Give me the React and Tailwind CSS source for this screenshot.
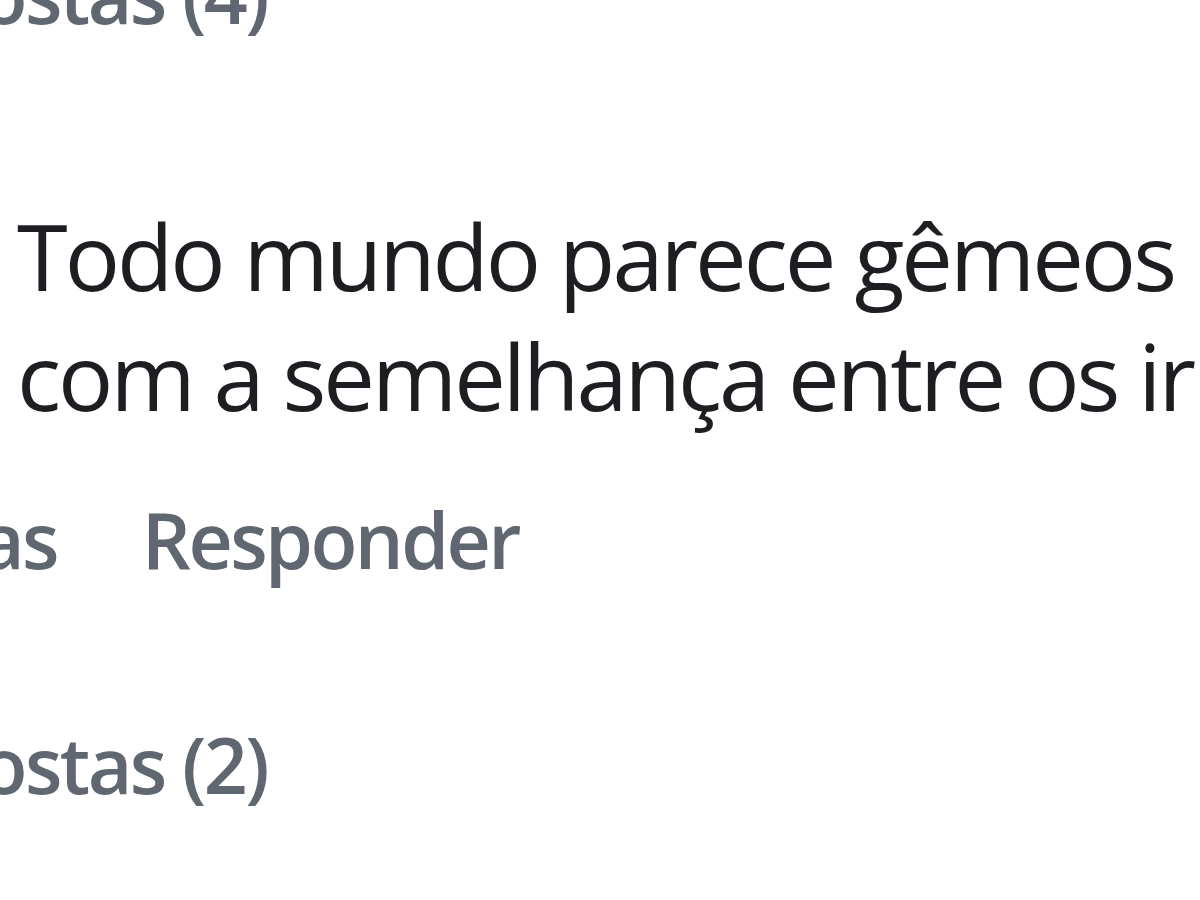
import React from 'react';

const gray = 'text-[#606770] font-semibold text-[77px] leading-[100px] tracking-[-2.6px] whitespace-nowrap';
const body = 'text-[#1c1e21] text-[92px] leading-[120px] tracking-[-3px] whitespace-nowrap';

const App = () => {
  return (
    <div className="w-[1200px] h-[900px] overflow-hidden bg-white" style={{ fontFamily: '"Open Sans", "Noto Sans", sans-serif' }}>
      <div className="flex flex-col">
        <div className={`${gray} mt-[-55px] ml-[-188px]`}>Respostas (4)</div>

        <div className="mt-[151px] ml-[17px]">
          <p className={body}>Todo mundo parece gêmeos idênticos, fiquei impressionada</p>
          <p className={body}>com a semelhança entre os irmãos</p>
        </div>

        <div className={`${gray} mt-[54px] ml-[-256px] flex gap-[85px]`}>
          <span>semanas</span>
          <span>Responder</span>
        </div>

        <div className={`${gray} mt-[125px] ml-[-188px]`}>Respostas (2)</div>
      </div>
    </div>
  );
};

export default App;
